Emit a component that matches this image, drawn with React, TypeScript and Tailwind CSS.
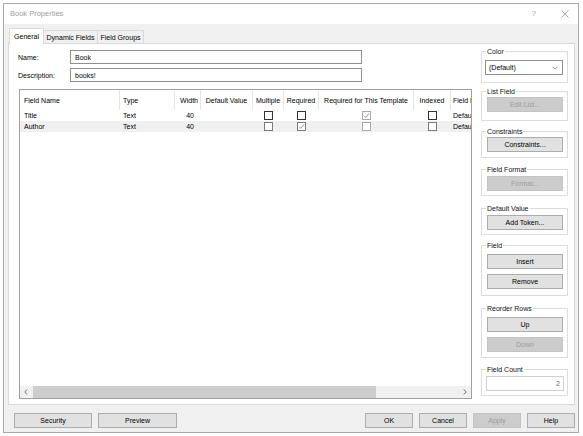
import React from 'react';

type BtnProps = { children: React.ReactNode; className: string; disabled?: boolean };

const Btn = ({ children, className, disabled }: BtnProps) => (
  <button
    className={`${className} h-[15px] flex items-center justify-center border leading-[9px] ${
      disabled ? 'bg-[#cccccc] border-[#c4c4c4] text-[#9c9c9c]' : 'bg-[#e1e1e1] border-[#adadad] text-black'
    }`}
  >
    {children}
  </button>
);

const Group = ({ label, className, children }: { label: string; className: string; children?: React.ReactNode }) => (
  <fieldset className={`border border-[#dcdcdc] w-[87px] ${className}`}>
    <legend className="ml-[4px] px-[1px] leading-[9px] text-[#111]">{label}</legend>
    {children}
  </fieldset>
);

const Check = ({ checked, tone }: { checked?: boolean; tone: 'dark' | 'mid' | 'light' }) => (
  <span
    className={`relative inline-block w-[9px] h-[9px] border bg-white ${
      tone === 'dark' ? 'border-[#333333]' : tone === 'mid' ? 'border-[#7a7a7a]' : 'border-[#a8a8a8]'
    }`}
  >
    {checked && (
      <svg className="absolute left-0 top-0" width="7" height="7" viewBox="0 0 7 7">
        <polyline points="1,3.6 2.8,5.4 6,1.4" fill="none" stroke={tone === 'dark' ? '#333' : '#8a8a8a'} strokeWidth="0.9" />
      </svg>
    )}
  </span>
);

const Chev = ({ dir }: { dir: 'left' | 'right' }) => (
  <svg width="4" height="6" viewBox="0 0 4 6">
    <polyline
      points={dir === 'left' ? '3.2,0.5 0.8,3 3.2,5.5' : '0.8,0.5 3.2,3 0.8,5.5'}
      fill="none"
      stroke="#606060"
      strokeWidth="0.9"
    />
  </svg>
);

export default function App() {
  return (
    <div className="w-[583px] h-[436px] bg-white pl-[3px] pt-[3px] font-['Liberation_Sans',Arial,sans-serif] text-[7px] text-black">
      <div className="w-[576px] h-[430px] border border-[#a9a9a9] flex flex-col">
        {/* title bar */}
        <div className="h-[20px] bg-white flex items-center pl-[6px] text-[#a0a0a0]">
          <span className="text-[7.5px] leading-[10px]">Book Properties</span>
          <span className="ml-auto text-[8px] leading-[10px]">?</span>
          <svg className="ml-[25px] mr-[9px]" width="8" height="8" viewBox="0 0 8 8">
            <line x1="0.5" y1="0.5" x2="7.5" y2="7.5" stroke="#8a8a8a" strokeWidth="0.7" />
            <line x1="7.5" y1="0.5" x2="0.5" y2="7.5" stroke="#8a8a8a" strokeWidth="0.7" />
          </svg>
        </div>

        {/* body */}
        <div className="flex-1 bg-[#f0f0f0] pt-[4px] pl-[4px] pr-[3px] flex flex-col">
          {/* tabs */}
          <div className="h-[15px] flex items-end ml-[1px]">
            <div className="relative z-10 h-[16px] -mb-[1px] w-[35px] bg-white border-l border-t border-r border-[#d9d9d9] flex items-center justify-center pb-[1px] leading-[9px]">
              General
            </div>
            <div className="h-[13px] w-[54px] border-t border-r border-[#d9d9d9] flex items-center justify-center leading-[9px]">
              Dynamic Fields
            </div>
            <div className="h-[13px] w-[46px] border-t border-r border-[#d9d9d9] flex items-center justify-center leading-[9px]">
              Field Groups
            </div>
          </div>

          {/* panel */}
          <div className="h-[362px] bg-white border border-[#d9d9d9] flex">
            {/* left column */}
            <div className="ml-[9px] w-[454px] flex flex-col pt-[6px]">
              <div className="h-[14px] flex items-center">
                <span className="w-[52px] leading-[9px]">Name:</span>
                <div className="w-[292px] h-[14px] border border-[#8f8f8f] flex items-center pl-[4px] leading-[9px]">Book</div>
              </div>
              <div className="mt-[4px] h-[14px] flex items-center">
                <span className="w-[52px] leading-[9px]">Description:</span>
                <div className="w-[292px] h-[14px] border border-[#8f8f8f] flex items-center pl-[4px] leading-[9px]">books!</div>
              </div>

              {/* list view */}
              <div className="mt-[7px] ml-[1px] w-[453px] h-[310px] border border-[#a0a0a0] flex flex-col">
                <div className="flex-1 overflow-hidden">
                  <div className="w-[600px]">
                    {/* header */}
                    <div className="h-[20px] flex whitespace-nowrap">
                      <div className="w-[100px] shrink-0 border-r border-[#e5e5e5] flex items-center pt-[3px] pl-[4px]">Field Name</div>
                      <div className="w-[55px] shrink-0 border-r border-[#e5e5e5] flex items-center pt-[3px] pl-[3px]">Type</div>
                      <div className="w-[26px] shrink-0 border-r border-[#e5e5e5] flex items-center justify-end pt-[3px] pr-[2px]">Width</div>
                      <div className="w-[52px] shrink-0 border-r border-[#e5e5e5] flex items-center justify-center pt-[3px]">Default Value</div>
                      <div className="w-[31px] shrink-0 border-r border-[#e5e5e5] flex items-center justify-center pt-[3px]">Multiple</div>
                      <div className="w-[35px] shrink-0 border-r border-[#e5e5e5] flex items-center justify-center pt-[3px]">Required</div>
                      <div className="w-[95px] shrink-0 border-r border-[#e5e5e5] flex items-center justify-center pt-[3px]">Required for This Template</div>
                      <div className="w-[37px] shrink-0 border-r border-[#e5e5e5] flex items-center justify-center pt-[3px]">Indexed</div>
                      <div className="w-[100px] shrink-0 border-r border-[#e5e5e5] flex items-center pt-[3px] pl-[2px]">Field Format</div>
                    </div>
                    {/* row 1 */}
                    <div className="h-[11px] flex whitespace-nowrap leading-[11px]">
                      <div className="w-[100px] shrink-0 pl-[4px]">Title</div>
                      <div className="w-[55px] shrink-0 pl-[3px]">Text</div>
                      <div className="w-[26px] shrink-0 text-right pr-[7px]">40</div>
                      <div className="w-[52px] shrink-0"></div>
                      <div className="w-[31px] shrink-0 flex items-center justify-center"><Check tone="dark" /></div>
                      <div className="w-[35px] shrink-0 flex items-center justify-center"><Check tone="dark" /></div>
                      <div className="w-[95px] shrink-0 flex items-center justify-center"><Check tone="light" checked /></div>
                      <div className="w-[37px] shrink-0 flex items-center justify-center"><Check tone="dark" /></div>
                      <div className="w-[100px] shrink-0 pl-[2px]">Default</div>
                    </div>
                    {/* row 2 */}
                    <div className="h-[11px] flex whitespace-nowrap leading-[11px] bg-[#f0f0f0]">
                      <div className="w-[100px] shrink-0 pl-[4px]">Author</div>
                      <div className="w-[55px] shrink-0 pl-[3px]">Text</div>
                      <div className="w-[26px] shrink-0 text-right pr-[7px]">40</div>
                      <div className="w-[52px] shrink-0"></div>
                      <div className="w-[31px] shrink-0 flex items-center justify-center"><Check tone="mid" /></div>
                      <div className="w-[35px] shrink-0 flex items-center justify-center"><Check tone="mid" checked /></div>
                      <div className="w-[95px] shrink-0 flex items-center justify-center"><Check tone="light" /></div>
                      <div className="w-[37px] shrink-0 flex items-center justify-center"><Check tone="mid" /></div>
                      <div className="w-[100px] shrink-0 pl-[2px]">Default</div>
                    </div>
                  </div>
                </div>
                {/* horizontal scrollbar */}
                <div className="h-[12px] bg-[#f0f0f0] flex items-center">
                  <div className="w-[12px] h-[12px] flex items-center justify-center"><Chev dir="left" /></div>
                  <div className="ml-[1px] w-[343px] h-[12px] bg-[#cdcdcd]"></div>
                  <div className="ml-auto w-[12px] h-[12px] flex items-center justify-center"><Chev dir="right" /></div>
                </div>
              </div>
            </div>

            {/* right column */}
            <div className="ml-[9px] pt-[3px] flex flex-col">
              <Group label="Color" className="h-[36px]">
                <div className="mt-[4px] ml-[3px] w-[78px] h-[15px] border border-[#8f8f8f] flex items-center pl-[3px] pr-[4px] leading-[9px]">
                  <span>(Default)</span>
                  <svg className="ml-auto" width="6" height="4" viewBox="0 0 6 4">
                    <polyline points="0.5,0.7 3,3.2 5.5,0.7" fill="none" stroke="#707070" strokeWidth="0.8" />
                  </svg>
                </div>
              </Group>
              <Group label="List Field" className="mt-[4px] h-[34px]">
                <Btn className="mt-[1px] ml-[5px] w-[76px]" disabled>Edit List...</Btn>
              </Group>
              <Group label="Constraints" className="mt-[6px] h-[31px]">
                <Btn className="mt-[1px] ml-[5px] w-[76px]">Constraints...</Btn>
              </Group>
              <Group label="Field Format" className="mt-[7px] h-[31px]">
                <Btn className="mt-[2px] ml-[5px] w-[76px]" disabled>Format...</Btn>
              </Group>
              <Group label="Default Value" className="mt-[8px] h-[31px]">
                <Btn className="mt-[2px] ml-[5px] w-[76px]">Add Token...</Btn>
              </Group>
              <Group label="Field" className="mt-[6px] h-[55px]">
                <Btn className="mt-[4px] ml-[5px] w-[76px]">Insert</Btn>
                <Btn className="mt-[5px] ml-[5px] w-[76px]">Remove</Btn>
              </Group>
              <Group label="Reorder Rows" className="mt-[8px] h-[54px]">
                <Btn className="mt-[4px] ml-[5px] w-[76px]">Up</Btn>
                <Btn className="mt-[5px] ml-[5px] w-[76px]" disabled>Down</Btn>
              </Group>
              <Group label="Field Count" className="mt-[7px] h-[31px]">
                <div className="mt-[2px] ml-[4px] w-[78px] h-[15px] border border-[#cfcfcf] flex items-center justify-end pr-[3px] leading-[9px] text-[#6d6d6d]">
                  2
                </div>
              </Group>
            </div>
          </div>

          {/* bottom buttons */}
          <div className="mt-[8px] h-[15px] flex pl-[6px]">
            <Btn className="w-[78px]">Security</Btn>
            <Btn className="ml-[6px] w-[79px]">Preview</Btn>
            <Btn className="ml-auto w-[48px]">OK</Btn>
            <Btn className="ml-[6px] w-[48px]">Cancel</Btn>
            <Btn className="ml-[6px] w-[48px]" disabled>Apply</Btn>
            <Btn className="ml-[6px] w-[48px]">Help</Btn>
          </div>
        </div>
      </div>
    </div>
  );
}
